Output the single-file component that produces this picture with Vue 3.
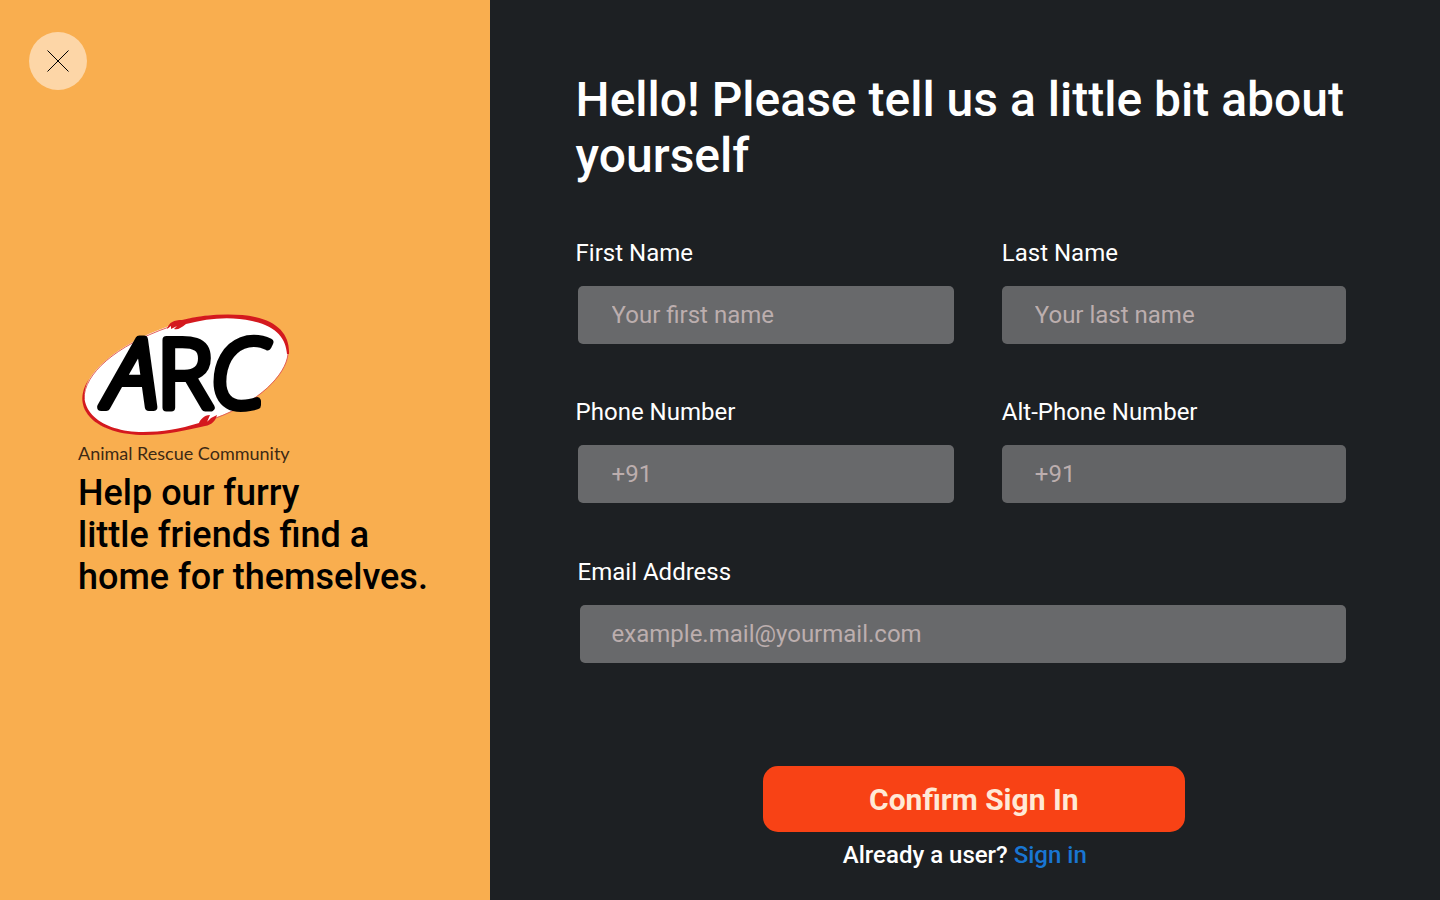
<script setup>
const fields = [
  { id: 'first-name', label: 'First Name', placeholder: 'Your first name', type: 'text', kind: 'start' },
  { id: 'last-name', label: 'Last Name', placeholder: 'Your last name', type: 'text', kind: 'end' },
  { id: 'phone', label: 'Phone Number', placeholder: '+91', type: 'tel', kind: 'start' },
  { id: 'alt-phone', label: 'Alt-Phone Number', placeholder: '+91', type: 'tel', kind: 'end' },
  { id: 'email', label: 'Email Address', placeholder: 'example.mail@yourmail.com', type: 'email', kind: 'wide' },
]
</script>

<template>
  <div class="page">
    <aside class="brand">
      <button class="close" type="button" aria-label="Close">
        <svg width="22" height="22" viewBox="0 0 22 22" aria-hidden="true">
          <path d="M.5 .5 21.500 21.500M21.500 .5 .5 21.500" fill="none" stroke="#000" stroke-width="1" />
        </svg>
      </button>
      <div class="intro">
        <svg class="logo" width="220" height="152" viewBox="78 312 220 152" role="img" aria-label="ARC Animal Rescue Community">
          <path d="M169 326C193 314 226 313 250 318C276 323 290 337 288 354C286 374 259 402 217 417C194 428 165 435 144 434C111 434 83 422 83 399C83 375 115 345 169 326Z" fill="#fff" />
          <path d="M169 327C115 346 84 374 84 399M216 418C259 402 286 375 288 354" fill="none" stroke="#e2605c" stroke-width="1" />
          <path d="M167 329C169 322 174 320 182 320C206 314 236 313 255 317C279 322 290 336 289 354L287 354C286 339 277 326 252 321C231 316 208 318 186 324C181 328 178 330 174 329L177 326L171 329L171 326Z" fill="#d4191e" />
          <path d="M89 379C69 409 96 435 145 435C166 435 188 430 205 426C212 425 216 420 217 415L211 418L207 422L210 415C204 415 200 420 199 423C180 429 162 432 143 432C101 432 73 409 89 379Z" fill="#d4191e" />
          <g class="wordmark">
            <text class="slanted" x="106" y="407">A</text>
            <text x="157" y="407">R</text>
            <text class="slanted" x="210" y="407">C</text>
          </g>
          <text class="tagline" x="78" y="460">Animal Rescue Community</text>
        </svg>
        <p class="slogan">Help our furry<br>little friends find a<br>home for themselves.</p>
      </div>
    </aside>

    <main class="content">
      <h1>Hello! Please tell us a little bit about yourself</h1>
      <form @submit.prevent>
        <div class="fields">
          <div v-for="f in fields" :key="f.id" class="field" :class="f.kind">
            <label :for="f.id">{{ f.label }}</label>
            <input :id="f.id" :type="f.type" :placeholder="f.placeholder">
          </div>
        </div>
        <div class="actions">
          <button class="confirm" type="submit">Confirm Sign In</button>
        </div>
      </form>
      <p class="signin">Already a user? <a href="#">Sign in</a></p>
    </main>
  </div>
</template>

<style>
body {
  margin: 0;
}
</style>

<style scoped>
.page {
  display: flex;
  min-height: 100vh;
  background: #1d2023;
  color: #fff;
  font-family: Roboto, "Liberation Sans", sans-serif;
}
.page * {
  box-sizing: border-box;
}
.brand {
  flex: 0 0 34%;
  padding: 32px 29px;
  background: #f9ae4f;
  color: #000;
}
.close {
  display: flex;
  align-items: center;
  justify-content: center;
  width: 58px;
  height: 58px;
  padding: 0;
  border: 0;
  border-radius: 50%;
  background: #fdd6a7;
  cursor: pointer;
}
.intro {
  margin: 222px 0 0 49px;
}
.logo {
  display: block;
  overflow: visible;
}
.wordmark {
  font: 300 94px "Open Sans", sans-serif;
  stroke: #000;
  stroke-width: 8px;
  stroke-linejoin: round;
}
.slanted {
  font-style: italic;
}
.tagline {
  font: 18px Lato, sans-serif;
  fill: #3d2914;
}
.slogan {
  margin: 8px 0 0;
  font-size: 36px;
  font-weight: 500;
  line-height: 42px;
  white-space: nowrap;
}
.content {
  flex: 1;
  min-width: 0;
  padding: 72px 94px 30px 86px;
}
h1 {
  margin: 0 0 55px;
  font-size: 48px;
  font-weight: 500;
  line-height: 56px;
}
.fields {
  display: grid;
  grid-template-columns: 378fr 344fr;
  gap: 54px 48px;
}
.field {
  display: flex;
  flex-direction: column;
  gap: 19px;
  min-width: 0;
}
.field.wide {
  grid-column: 1 / -1;
  padding: 1px 0 0 2px;
}
label {
  font-size: 24px;
  line-height: 28px;
}
input {
  height: 58px;
  padding: 0 32px;
  border: 0;
  border-radius: 5px;
  background: #68696b;
  color: #fff;
  font: 24px Roboto, "Liberation Sans", sans-serif;
}
.start input,
.wide input {
  margin-left: 2px;
}
.start input {
  padding-left: 34px;
}
.end input {
  padding-left: 33px;
  background: #636466;
}
input::placeholder {
  color: #bcaeae;
  opacity: 1;
}
.actions {
  padding: 103px 0 0 26px;
}
.confirm {
  display: block;
  width: 422px;
  max-width: 100%;
  height: 66px;
  margin: 0 auto;
  border: 0;
  border-radius: 15px;
  background: #f84215;
  color: #ffe9d6;
  font: 700 30px Roboto, "Liberation Sans", sans-serif;
  cursor: pointer;
}
.signin {
  margin: 9px 0 0;
  padding-left: 8px;
  text-align: center;
  font-size: 24px;
  font-weight: 500;
  line-height: 28px;
}
.signin a {
  color: #1976d2;
  text-decoration: none;
}
</style>
